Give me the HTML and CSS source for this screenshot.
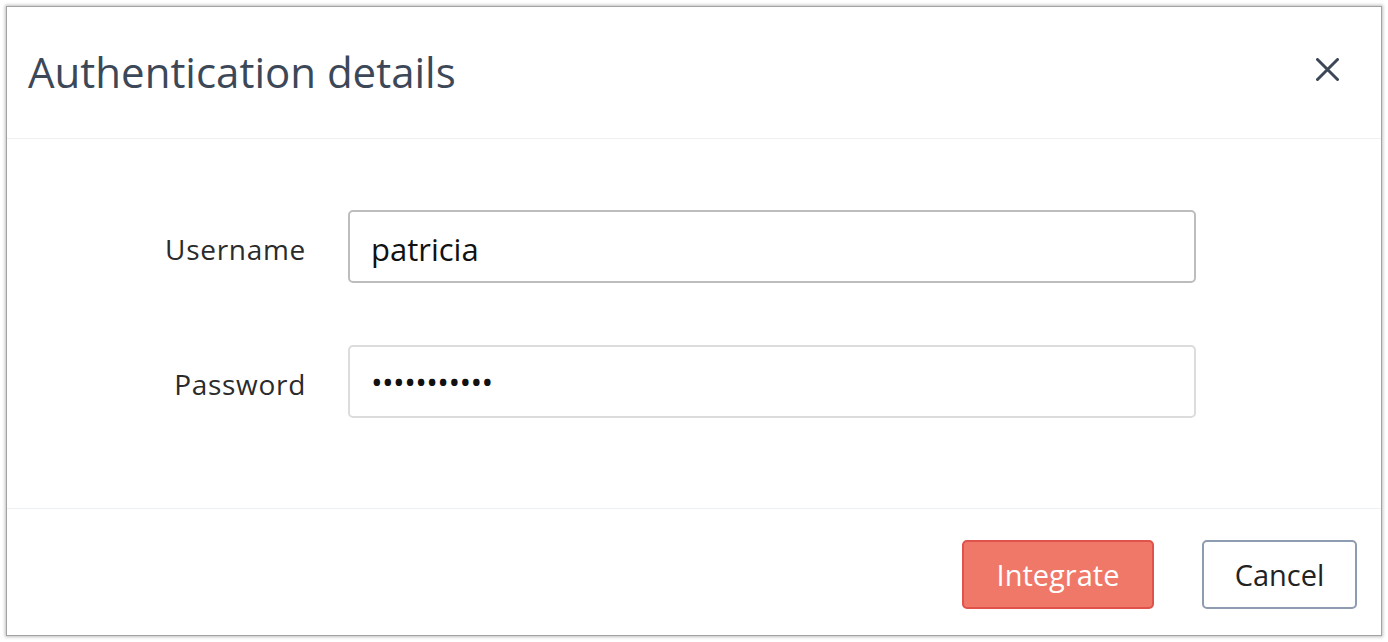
FILE: index.html
```html
<!DOCTYPE html>
<html lang="en">
<head>
<meta charset="utf-8">
<title>Authentication details</title>
<link rel="stylesheet" href="styles.css">
</head>
<body>
<div class="modal">
  <div class="modal-header">
    <h1 class="modal-title">Authentication details</h1>
    <button class="close-btn" aria-label="Close">
      <svg width="23" height="23" viewBox="0 0 23 23"><path d="M1.5 1.5 L21.5 21.5 M21.5 1.5 L1.5 21.5" stroke="#3c4858" stroke-width="3" stroke-linecap="round" fill="none"/></svg>
    </button>
  </div>
  <div class="modal-body">
    <form class="form-grid">
      <label class="form-label" for="user">Username</label>
      <input class="form-input focused" id="user" type="text" value="patricia">
      <label class="form-label" for="pass">Password</label>
      <input class="form-input password" id="pass" type="password" value="patricia123">
    </form>
  </div>
  <div class="modal-footer">
    <button class="btn btn-primary">Integrate</button>
    <button class="btn btn-default">Cancel</button>
  </div>
</div>
</body>
</html>
```

FILE: styles.css
```css
html, body {
  margin: 0;
  padding: 0;
  background: #ffffff;
}
body {
  font-family: "Open Sans", "Noto Sans", sans-serif;
  padding: 6px;
  box-sizing: border-box;
  height: 642px;
}
.modal {
  box-sizing: border-box;
  height: 630px;
  border: 1px solid #a3a3a3;
  box-shadow: 0 0 3px 1px rgba(0,0,0,0.25);
  background: #fff;
  display: flex;
  flex-direction: column;
}
.modal-header {
  height: 131px;
  display: flex;
  align-items: center;
  justify-content: space-between;
  padding: 0 42px 0 21px;
  border-bottom: 1px solid #edf1f4;
}
.modal-title {
  margin: 0;
  font-size: 42px;
  font-weight: 400;
  color: #3c4858;
  line-height: 1;
  padding-bottom: 2px;
}
.close-btn {
  border: 0;
  background: none;
  padding: 0;
  width: 23px;
  height: 23px;
  display: flex;
  margin-bottom: 6px;
}
.modal-body {
  padding: 71px 0 90px 0;
  border-bottom: 1px solid #edf1f4;
}
.form-grid {
  display: grid;
  grid-template-columns: 299px 848px;
  column-gap: 42px;
  row-gap: 62px;
  align-items: center;
  margin: 0;
}
.form-label {
  text-align: right;
  font-size: 28px;
  letter-spacing: 0.7px;
  color: #2b2b2b;
  padding-top: 5px;
}
.form-input {
  box-sizing: border-box;
  height: 73px;
  width: 848px;
  border: 2px solid #dcdcdc;
  border-radius: 5px;
  padding: 4px 21px 0 21px;
  font-family: "Open Sans", "Noto Sans", sans-serif;
  font-size: 31px;
  color: #111;
  outline: none;
  background: #fff;
}
.form-input.focused {
  border-color: #bdbdbd;
}
.form-input.password {
  letter-spacing: -0.6px;
  padding-top: 0;
}
.modal-footer {
  flex: 1;
  display: flex;
  justify-content: flex-end;
  align-items: flex-start;
  gap: 48px;
  padding: 31px 24px 0 0;
}
.btn {
  box-sizing: border-box;
  height: 69px;
  border-radius: 5px;
  font-family: "Open Sans", "Noto Sans", sans-serif;
  font-size: 29px;
  padding: 0;
}
.btn-primary {
  width: 192px;
  background: #ef7869;
  border: 2px solid #e0534b;
  color: #fff;
}
.btn-default {
  width: 155px;
  background: #fff;
  border: 2px solid #8d9cb0;
  color: #222;
}
```
